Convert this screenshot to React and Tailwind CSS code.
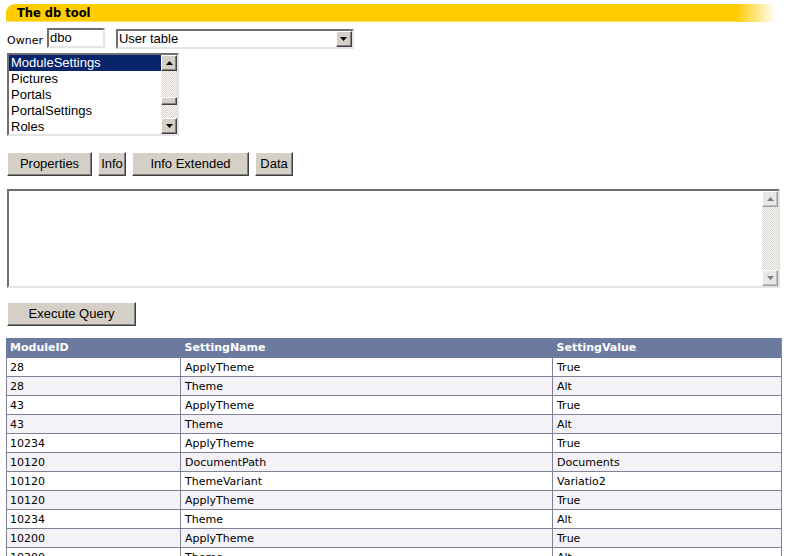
import React from "react";

const rows = [
    ["28", "ApplyTheme", "True"],
    ["28", "Theme", "Alt"],
    ["43", "ApplyTheme", "True"],
    ["43", "Theme", "Alt"],
    ["10234", "ApplyTheme", "True"],
    ["10120", "DocumentPath", "Documents"],
    ["10120", "ThemeVariant", "Variatio2"],
    ["10120", "ApplyTheme", "True"],
    ["10234", "Theme", "Alt"],
    ["10200", "ApplyTheme", "True"],
    ["10200", "Theme", "Alt"],
];

const tables = ["ModuleSettings", "Pictures", "Portals", "PortalSettings", "Roles"];

const raised = "bg-[#d4d0c8] border border-t-white border-l-white border-b-[#404040] border-r-[#404040] shadow-[inset_-1px_-1px_0_#808080]";
const sunken = "bg-white border-2 border-t-[#6f6f6f] border-l-[#6f6f6f] border-b-[#e4e4e4] border-r-[#e4e4e4]";
const dither = "bg-[repeating-conic-gradient(#d4d0c8_0%_25%,#ffffff_0%_50%)] bg-[length:2px_2px]";

const Arrow = ({ down }) => (
    <svg width="7" height="4" viewBox="0 0 7 4">
        {down ? <polygon points="0,0 7,0 3.5,4" fill="#000" /> : <polygon points="0,4 7,4 3.5,0" fill="#000" />}
    </svg>
);

const ScrollBtn = ({ down, faded }) => (
    <div className={`${raised} w-[16px] h-[16px] flex items-center justify-center ${faded ? "opacity-50" : ""}`}>
        <Arrow down={down} />
    </div>
);

const Button = ({ text, width, height = "h-[24px]" }) => (
    <div className={`${raised} ${width} ${height} flex items-center justify-center text-[13px] text-black`}>
        {text}
    </div>
);

const App = () => {
    const arial = "font-['Liberation_Sans',Arial,sans-serif]";
    const verdana = "font-['DejaVu_Sans',Verdana,sans-serif]";

    return <div className={`w-[788px] h-[556px] overflow-hidden bg-white pt-[4px] pl-[6px] ${arial}`}>
        <div className="flex h-[18px] w-[770px]">
            <div className="flex-1 bg-[#ffcc00] rounded-tl-[9px] flex items-center pl-[11px] pt-[3px] border-b border-[#ffe066]">
                <span className={`${verdana} font-bold text-[11.5px] text-black leading-none`}>The db tool</span>
            </div>
            <div className="w-[40px] bg-[linear-gradient(to_right,#ffcc00,rgba(255,220,80,0))]" />
        </div>

        <div className="flex items-end mt-[6px] pl-[1px]">
            <span className={`${verdana} text-[11px] text-black leading-none mb-[2px]`}>Owner</span>
            <div className={`${sunken} ml-[4px] w-[58px] h-[20px] flex items-center pl-[1px] text-[13px]`}>dbo</div>
            <div className={`${sunken} ml-[11px] mb-[-1px] w-[238px] h-[20px] flex items-center justify-between pl-[1px] text-[13px]`}>
                <span>User table</span>
                <ScrollBtn down />
            </div>
        </div>

        <div className={`${sunken} ml-[1px] mt-[5px] w-[172px] h-[83px] flex`}>
            <div className="flex-1 flex flex-col text-[13px] leading-[16px]">
                {tables.map((t, i) => (
                    <div key={t} className={`h-[16px] pl-[2px] ${i === 0 ? "bg-[#0a246a] text-white" : "text-black"}`}>{t}</div>
                ))}
            </div>
            <div className="w-[16px] flex flex-col">
                <ScrollBtn />
                <div className={`flex-1 ${dither} flex flex-col`}>
                    <div className="h-[26px]" />
                    <div className={`${raised} h-[8px]`} />
                </div>
                <ScrollBtn down />
            </div>
        </div>

        <div className="flex mt-[16px] ml-[1px] gap-[6px]">
            <Button text="Properties" width="w-[85px]" />
            <Button text="Info" width="w-[28px]" />
            <Button text="Info Extended" width="w-[117px]" />
            <Button text="Data" width="w-[38px]" />
        </div>

        <div className={`${sunken} ml-[1px] mt-[13px] w-[773px] h-[99px] flex justify-end`}>
            <div className="w-[16px] flex flex-col">
                <ScrollBtn faded />
                <div className={`flex-1 ${dither}`} />
                <ScrollBtn down faded />
            </div>
        </div>

        <div className="mt-[14px] ml-[1px]">
            <Button text="Execute Query" width="w-[129px]" height="h-[24px]" />
        </div>

        <table className={`mt-[12px] w-[775px] border-collapse ${verdana} text-[11px] table-fixed`}>
            <colgroup>
                <col className="w-[174px]" />
                <col className="w-[372px]" />
                <col className="w-[229px]" />
            </colgroup>
            <thead>
                <tr className="h-[19px] bg-[#6b7b9f] text-white">
                    <th className="text-left font-bold pl-[3px] border border-[#6b7b9f] border-r-0">ModuleID</th>
                    <th className="text-left font-bold pl-[4px] border border-[#6b7b9f] border-x-0">SettingName</th>
                    <th className="text-left font-bold pl-[4px] border border-[#6b7b9f] border-l-0 border-r-[#8a8c9e]">SettingValue</th>
                </tr>
            </thead>
            <tbody>
                {rows.map((r, i) => (
                    <tr key={i} className={`h-[19px] ${i % 2 ? "bg-[#f4f2f6]" : "bg-white"} text-black`}>
                        <td className="pl-[3px] border border-[#7f8196] leading-none">{r[0]}</td>
                        <td className="pl-[4px] border border-[#7f8196] leading-none">{r[1]}</td>
                        <td className="pl-[4px] border border-[#7f8196] leading-none">{r[2]}</td>
                    </tr>
                ))}
            </tbody>
        </table>
    </div>
}

export default App;
